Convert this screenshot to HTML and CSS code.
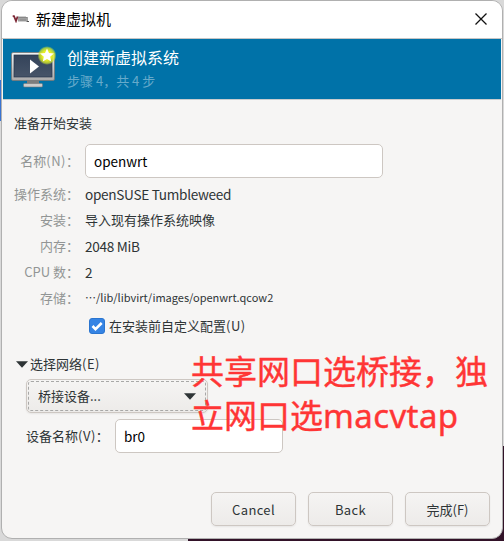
FILE: index.html
```
<!DOCTYPE html>
<html lang="zh-CN">
<head>
<meta charset="utf-8">
<title>新建虚拟机</title>
<link rel="stylesheet" href="styles.css">
</head>
<body>
<main class="window">
  <header class="titlebar">
    <svg class="logo" viewBox="0 0 18 8" fill="none"><path d="M.7 1.2H2L4 6 5.6 1.5" stroke="#7d2936" stroke-width="1.8"/><path d="M7 1.5V6.5M9 1.5V6.5M11 1.5V6.5M13 1.5V6.5M15 2V6.5H17" stroke="#555" stroke-width="1.1"/><path d="M6.5 2.5H15M8 5H14" stroke="#888" stroke-width="1"/></svg>
    <h1>新建虚拟机</h1>
    <svg class="close" viewBox="0 0 14 14"><path d="M1.5 1.5 12.5 12.5M12.5 1.5 1.5 12.5" stroke="#111" stroke-width="1.3"/></svg>
  </header>
  <section class="banner">
    <svg class="monitor" viewBox="0 0 48 48">
      <defs>
        <linearGradient id="frame" x2="0" y2="1"><stop stop-color="#f4f4f4"/><stop offset="1" stop-color="#aaa"/></linearGradient>
        <linearGradient id="screen" x2="0" y2="1"><stop stop-color="#34435a"/><stop offset="1" stop-color="#465468"/></linearGradient>
        <radialGradient id="glow"><stop offset=".5" stop-color="#e8ef24"/><stop offset=".8" stop-color="#d2e72c" stop-opacity=".75"/><stop offset="1" stop-color="#c8e43a" stop-opacity="0"/></radialGradient>
      </defs>
      <path d="M17 37H29V42H17Z" fill="#7d7d7d"/>
      <rect x="13.5" y="40.5" width="19" height="3.5" rx="1" fill="#ccc" stroke="#777" stroke-width=".6"/>
      <rect x="1.5" y="9.5" width="43" height="28" rx="1.5" fill="url(#frame)" stroke="#777" stroke-width=".8"/>
      <rect x="4" y="12" width="38" height="22" fill="url(#screen)" stroke="#26364c" stroke-width=".7"/>
      <path d="M20 16.5V30.5L29 23.5Z" fill="#fff"/>
      <circle cx="37" cy="12.5" r="9.5" fill="url(#glow)"/>
      <path d="m37 5.5 2 4.5 4.8.5-3.6 3.2 1 4.8-4.2-2.5-4.2 2.5 1-4.8-3.6-3.2 4.8-.5Z" fill="#fff"/>
    </svg>
    <div><h2>创建新虚拟系统</h2><p>步骤 4，共 4 步</p></div>
  </section>
  <section class="content">
    <h3>准备开始安装</h3>
    <dl class="summary">
      <dt>名称<span class="mnemonic">(N)</span>：</dt><dd><span class="field name">openwrt</span></dd>
      <dt>操作系统：</dt><dd class="latin">openSUSE Tumbleweed</dd>
      <dt>安装：</dt><dd>导入现有操作系统映像</dd>
      <dt>内存：</dt><dd class="latin">2048 MiB</dd>
      <dt>CPU 数：</dt><dd class="latin">2</dd>
      <dt>存储：</dt><dd class="path">⋯/lib/libvirt/images/openwrt.qcow2</dd>
    </dl>
    <div class="customize"><svg viewBox="0 0 16 16"><rect x=".5" y=".5" width="15" height="15" rx="2.5" fill="#3584e4" stroke="#2a75cf"/><path d="m3.5 8 3 3.2L12.7 5" fill="none" stroke="#fff" stroke-width="2.6"/></svg><span>在安装前自定义配置<span class="mnemonic">(U)</span></span></div>
    <div class="expander"><svg viewBox="0 0 12 7"><path d="M0 .3H12L6 6.7Z" fill="#2e3436"/></svg><span>选择网络<span class="mnemonic">(E)</span></span></div>
    <div class="combo"><span>桥接设备...</span><svg viewBox="0 0 12 7"><path d="M0 .3H12L6 6.7Z" fill="#2e3436"/></svg></div>
    <div class="device"><span class="device-label">设备名称<span class="mnemonic">(V)</span>：</span><span class="field bridge">br0</span></div>
  </section>
  <footer class="actions"><button>Cancel</button><button>Back</button><button class="finish">完成(F)</button></footer>
</main>
<div class="note">共享网口选桥接，独<br>立网口选<span>macvtap</span></div>
</body>
</html>
```
FILE: styles.css
```
* { box-sizing: border-box; }
body {
  margin: 0;
  width: 504px;
  height: 541px;
  padding: 0 1px 2px;
  overflow: hidden;
  position: relative;
  font: 13px/20px "Noto Sans CJK SC", sans-serif;
  color: #2e3436;
  background:
    linear-gradient(#3973d1, #3973d1) 0 80px / 2px 41px no-repeat,
    linear-gradient(#321228, #321228) 188px 538px / 316px 3px no-repeat,
    linear-gradient(#321228, #321228) 490px 446px / 14px 95px no-repeat,
    #d9d9d9;
}
h1, h2, h3, p, dl, dd { margin: 0; font-weight: 400; }
svg { display: block; flex: none; }
.window {
  width: 502px;
  height: 539px;
  border: 1px solid #b0b0b0;
  border-radius: 11px;
  overflow: hidden;
  background: #f6f5f4;
  display: flex;
  flex-direction: column;
}
.titlebar {
  height: 38px;
  flex: none;
  display: flex;
  align-items: center;
  padding: 0 14px 1px 10px;
  background: #fff;
  border-bottom: 1px solid #c5c5c5;
}
.logo { width: 18px; height: 8px; margin-right: 6px; }
.titlebar h1 { font-size: 15px; color: #000; }
.close { width: 14px; height: 14px; margin-left: auto; }
.banner {
  height: 61px;
  flex: none;
  display: flex;
  margin: 0 1px;
  background: #0072a8;
  border-bottom: 1px solid #c8ccce;
  color: #fff;
}
.monitor { width: 48px; height: 48px; margin: 4px 9px 0 7px; }
.banner h2 { font-size: 16px; line-height: 24px; margin-top: 6px; }
.banner p { color: #66aacb; margin-top: 2px; }
.content { flex: 1; padding: 13px 12px 0; }
.content h3 { font-size: 13px; }
.summary {
  display: grid;
  grid-template-columns: 71px 1fr;
  grid-template-rows: 37px repeat(5, 26px);
  align-items: center;
  margin-top: 11px;
}
.summary > :nth-child(-n+2) { align-self: start; }
.summary dt { color: #929595; text-align: right; padding-right: 6px; white-space: nowrap; }
.summary dt:first-child { line-height: 34px; }
.mnemonic { letter-spacing: .5px; }
.summary .latin { font-size: 13.6px; letter-spacing: -.3px; }
.field {
  display: flex;
  align-items: center;
  height: 34px;
  padding: 0 8px;
  border: 1px solid #cdc7c2;
  border-radius: 5px;
  background: #fff;
  color: #000;
  font-size: 13.5px;
}
.name { width: 298px; }
.summary .path { font-size: 11px; padding-bottom: 2px; }
.customize { display: flex; align-items: center; height: 20px; margin: 5px 0 0 75px; gap: 4px; }
.customize svg { width: 16px; height: 16px; }
.expander { display: flex; align-items: center; height: 20px; margin: 18px 0 0 2px; gap: 2px; }
.expander svg, .combo svg { width: 12px; height: 7px; }
.combo {
  display: flex;
  align-items: center;
  justify-content: space-between;
  width: 182px;
  height: 34px;
  margin: 5px 0 0 12px;
  padding: 0 11px;
  border: 1px solid #cdc7c2;
  border-radius: 5px;
  background: linear-gradient(#f5f4f3, #edebe9);
  box-shadow: 0 1px 2px #0001;
  outline: 1px dashed #a8a8a7;
  outline-offset: -3px;
}
.device { display: flex; align-items: center; margin: 6px 0 0 12px; }
.device-label { width: 89px; white-space: nowrap; }
.bridge { width: 168px; }
.actions { display: flex; justify-content: flex-end; gap: 12px; padding: 0 12px 12px 0; }
button {
  width: 85px;
  height: 34px;
  padding: 1px 0 0;
  font: inherit;
  color: inherit;
  letter-spacing: .35px;
  border: 1px solid #cdc7c2;
  border-radius: 5px;
  background: linear-gradient(#f5f4f3, #edebe9);
  box-shadow: 0 1px 2px #0001;
}
.finish { letter-spacing: 0; }
.note {
  position: absolute;
  left: 191px;
  top: 348px;
  font-size: 33px;
  line-height: 44px;
  color: #ff3535;
  white-space: nowrap;
  -webkit-text-stroke: .4px #ff3535;
}
.note span { font-family: "Noto Sans", sans-serif; letter-spacing: .4px; }
```
